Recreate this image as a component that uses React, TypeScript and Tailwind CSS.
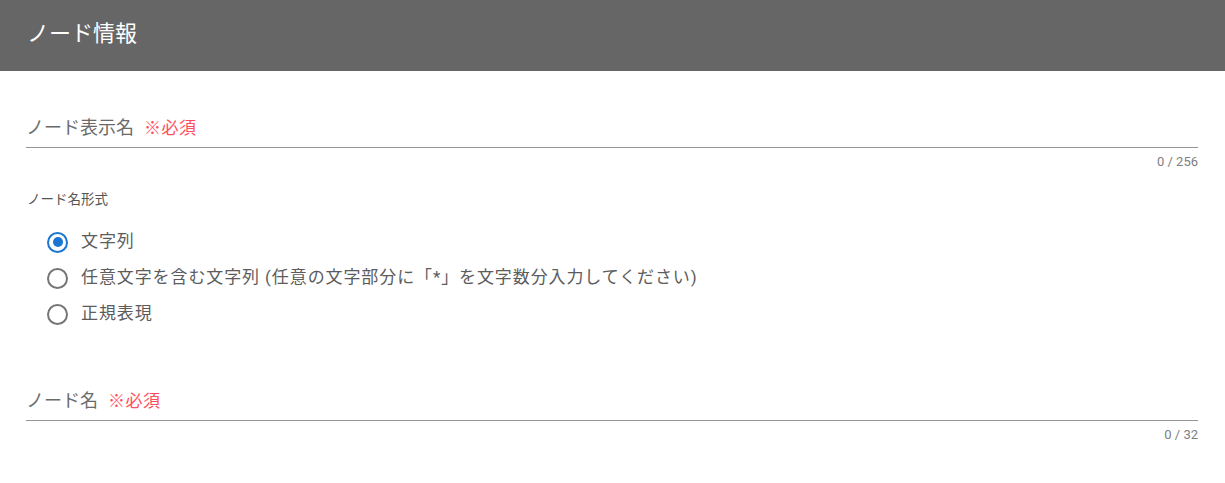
const font = { fontFamily: 'Roboto, "Noto Sans CJK JP", sans-serif' };

function Field({ label, max }: { label: string; max: number }) {
  return (
    <div>
      <div className="border-b border-[#949494] pb-[7px] h-[32px] flex items-center text-[18px] leading-[24px]">
        <span className="text-[#6b6b6b]">{label}</span>
        <span className="ml-[10px] text-[#ff4f5e] text-[17px] tracking-[0.5px]">※必須</span>
      </div>
      <div className="mt-[6px] text-right text-[13px] leading-[16px] text-[#808080]">0 / {max}</div>
    </div>
  );
}

function Radio({ label, checked }: { label: string; checked?: boolean }) {
  return (
    <label className="flex items-center h-[36px] pl-[21px] cursor-pointer">
      <span
        className={`w-[21px] h-[21px] rounded-full border-2 flex items-center justify-center ${
          checked ? "border-[#1976d2]" : "border-[#757575]"
        }`}
      >
        {checked && <span className="w-[10px] h-[10px] rounded-full bg-[#1976d2]" />}
      </span>
      <span className="ml-[13px] text-[17px] tracking-[0.9px] text-[#5c5c5c]">{label}</span>
    </label>
  );
}

export default function App() {
  return (
    <div className="w-[1225px] h-[483px] bg-white" style={font}>
      <div className="h-[71px] bg-[#666666] flex items-center pl-[27px] pb-[5px] text-white text-[22px]">
        ノード情報
      </div>
      <div className="px-[26px] pr-[27px] pt-[45px]">
        <Field label="ノード表示名" max={256} />
        <div className="mt-[20px] text-[13.5px] leading-[18px] text-[#555555] pl-[1px]">ノード名形式</div>
        <div className="mt-[16px]">
          <Radio label="文字列" checked />
          <Radio label="任意文字を含む文字列 (任意の文字部分に「*」を文字数分入力してください)" />
          <Radio label="正規表現" />
        </div>
        <div className="mt-[57px]">
          <Field label="ノード名" max={32} />
        </div>
      </div>
    </div>
  );
}
